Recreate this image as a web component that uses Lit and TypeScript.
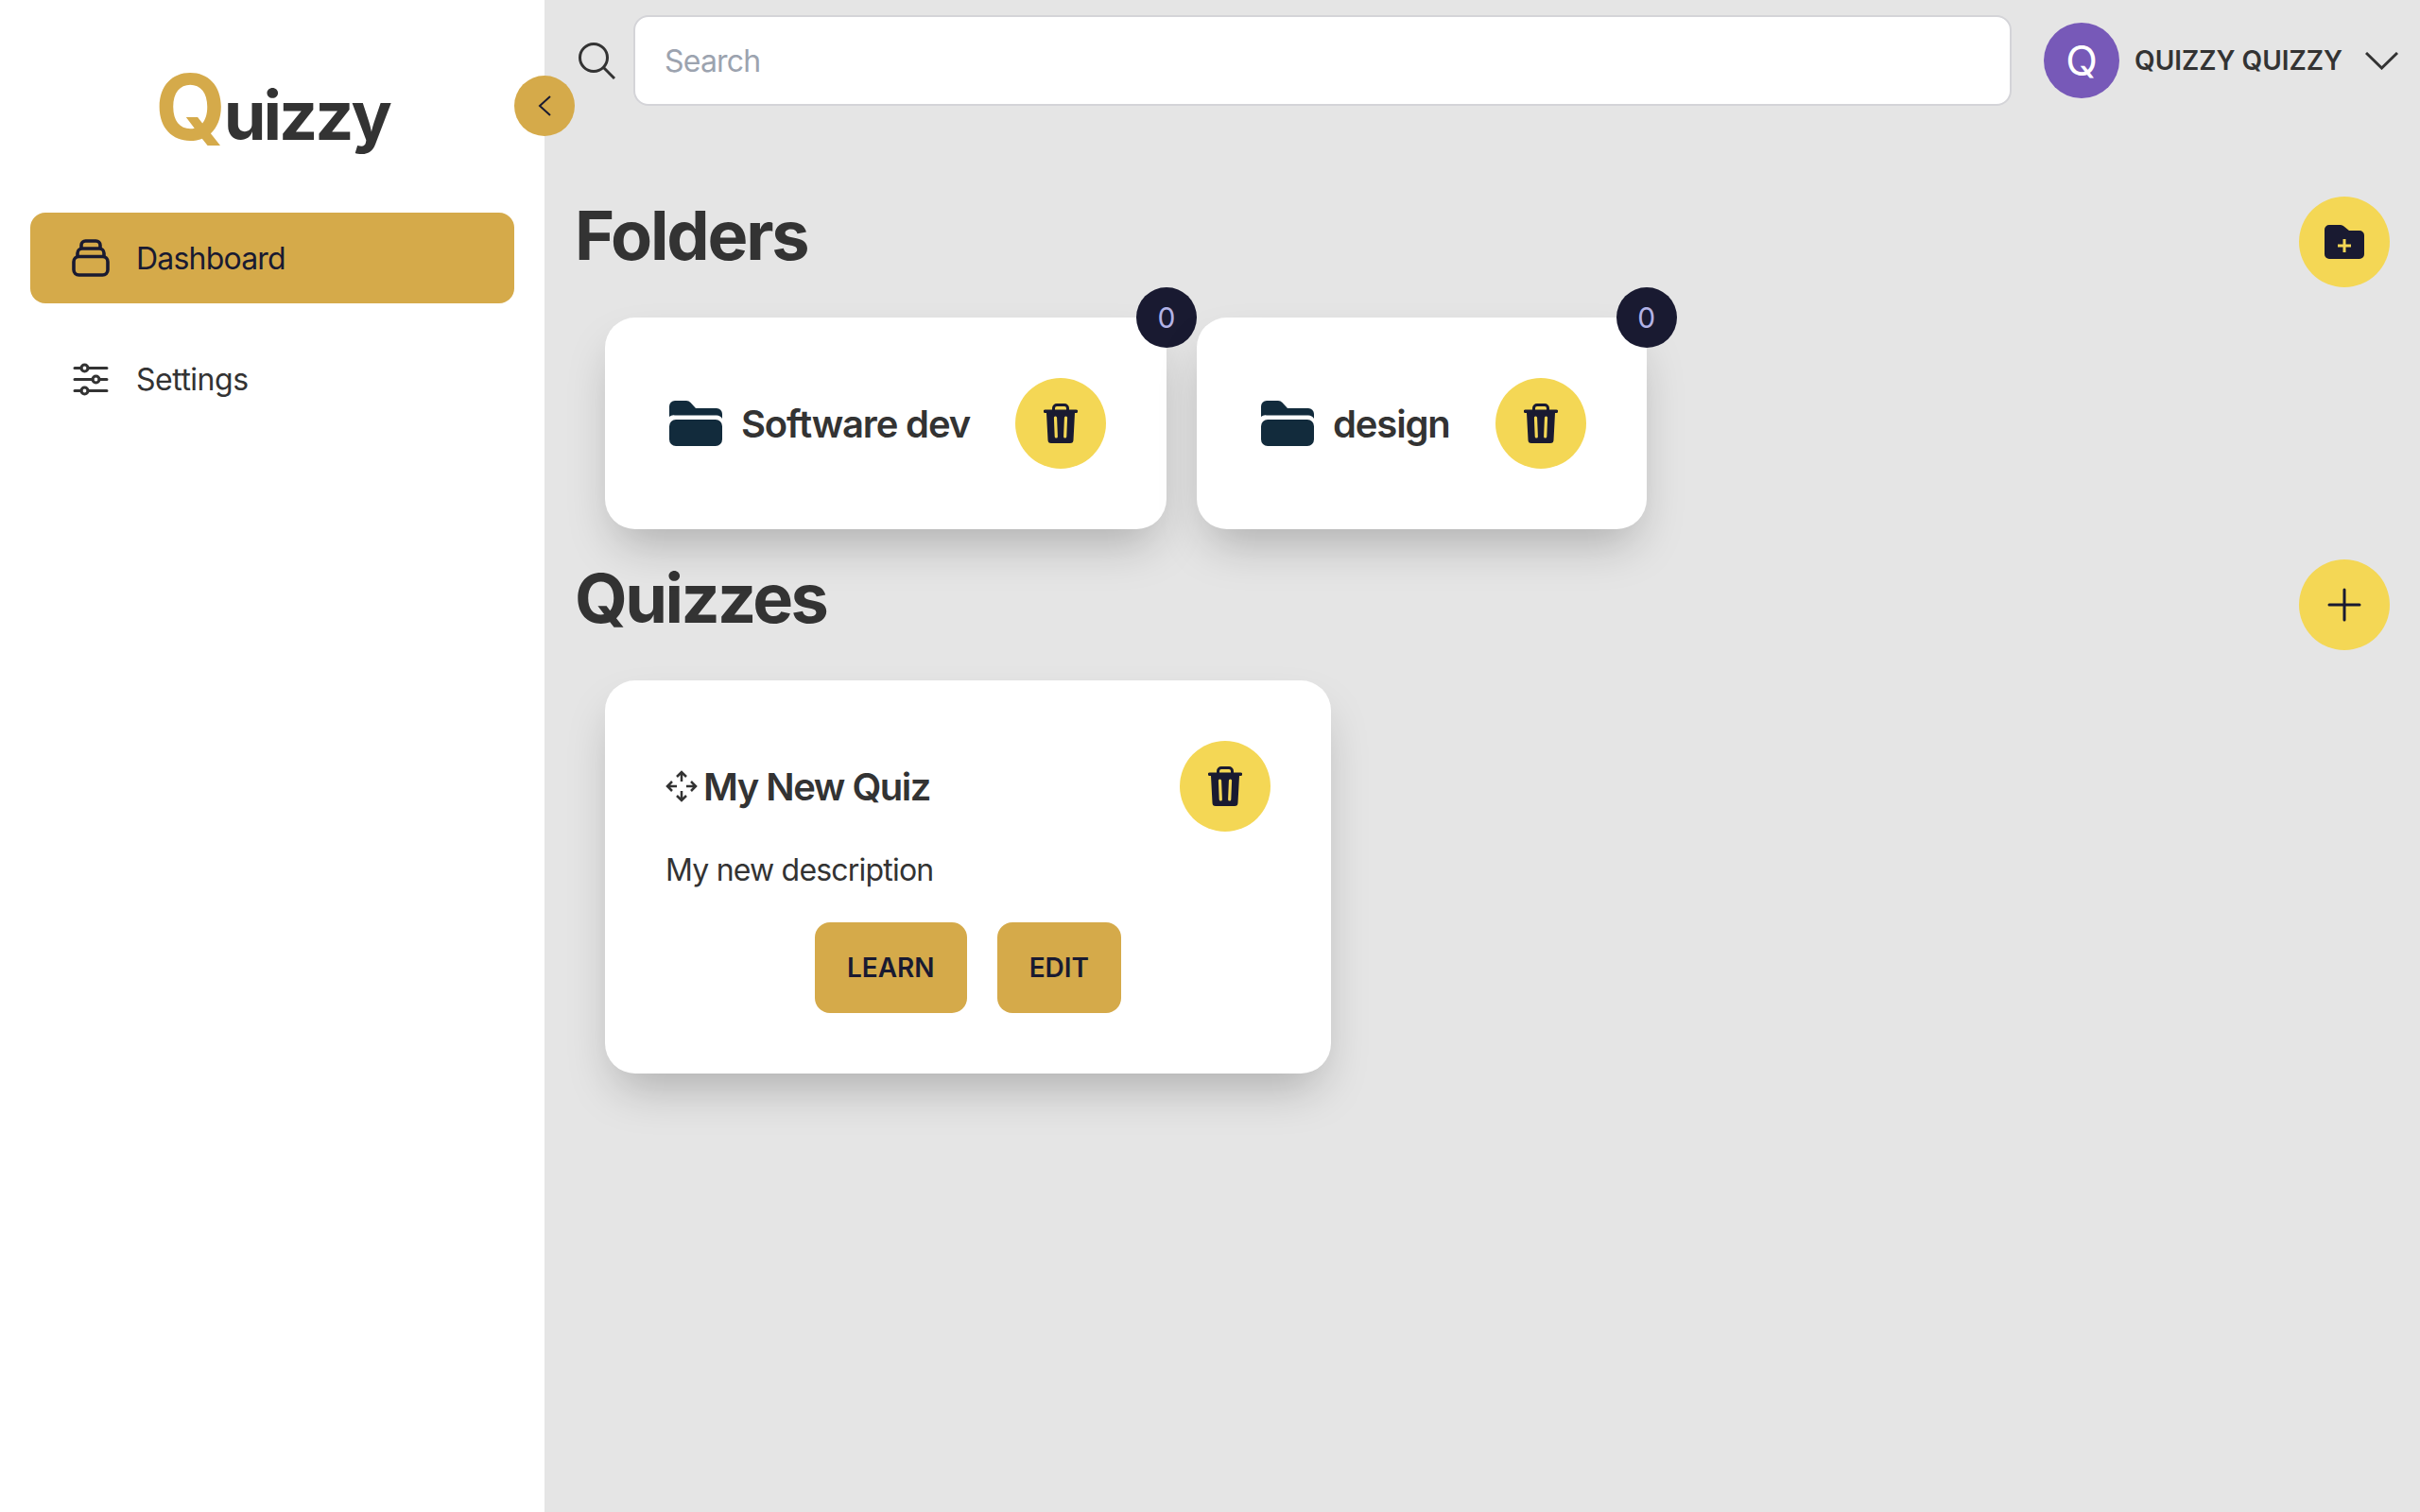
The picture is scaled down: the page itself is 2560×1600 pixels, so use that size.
import { LitElement, css, html, svg } from "lit";
import { customElement } from "lit/decorators.js";

const trashIcon = html`<svg class="trash" viewBox="0 0 36 42" width="36" height="42">
  <path d="M10.5 8V5a3.5 3.5 0 0 1 3.5-3.5h8A3.5 3.5 0 0 1 25.500 5V8" fill="none" stroke="#191a31" stroke-width="3" />
  <path d="M1.500 6.500H34.500a1.500 1.500 0 0 1 0 3.500L33 10 31.500 38.500a3.500 3.500 0 0 1-3.500 3.500H8a3.500 3.500 0 0 1-3.500-3.500L3 10H1.500a1.500 1.500 0 0 1 0-3.500z" fill="#191a31" />
  <path d="M12.500 15l.8 20M23.500 15l-.8 20" fill="none" stroke="#f4d755" stroke-width="3.200" stroke-linecap="round" />
</svg>`;

const folderIcon = html`<svg viewBox="0 0 56 48" width="56" height="48" class="folder">
  <path d="M0 17V6a6 6 0 0 1 6-6H18a6 6 0 0 1 4.500 2L28 8H50a6 6 0 0 1 6 6V19a7 7 0 0 0-6-3.500H6a7 7 0 0 0-6 1.500z" fill="#122b3c" />
  <rect y="20" width="56" height="28" rx="7" fill="#122b3c" />
</svg>`;

const folders = [
  { name: "Software dev", count: 0 },
  { name: "design", count: 0 },
];

const arrowPaths = svg`
  <path d="M17 2V12M12 7l5-5 5 5M17 32V22M12 27l5 5 5-5M2 17H12M7 12l-5 5 5 5M32 17H22M27 12l5 5-5 5" />
`;

@customElement("app-root")
export class AppRoot extends LitElement {
  static styles = css`
    :host {
      display: flex;
      width: 2560px;
      min-height: 1600px;
      font-family: Inter, "Liberation Sans", sans-serif;
      color: #333;
      background: #e5e5e5;
    }
    .sidebar {
      position: relative;
      flex: 0 0 576px;
      background: #fff;
      box-sizing: border-box;
      padding: 0 32px;
    }
    .logo {
      height: 225px;
      box-sizing: border-box;
      padding-top: 58px;
      text-align: center;
      font-weight: 700;
      font-size: 72px;
      line-height: 110px;
      letter-spacing: -3px;
      white-space: nowrap;
    }
    .logo span {
      color: #d5aa4a;
      font-size: 96px;
      letter-spacing: -2px;
    }
    .collapse {
      position: absolute;
      top: 80px;
      right: -32px;
      width: 64px;
      height: 64px;
      border-radius: 50%;
      background: #d5aa4a;
      display: flex;
      align-items: center;
      justify-content: center;
      z-index: 2;
    }
    .nav {
      display: flex;
      flex-direction: column;
      gap: 32px;
    }
    .nav-item {
      display: flex;
      align-items: center;
      gap: 28px;
      height: 96px;
      padding-left: 44px;
      border-radius: 16px;
      font-size: 32px;
      letter-spacing: -0.5px;
    }
    .nav-item.active {
      background: #d5aa4a;
      color: #191a31;
      letter-spacing: -0.8px;
    }
    .nav-icon {
      flex: 0 0 40px;
    }
    .main {
      flex: 1;
      min-width: 0;
      display: flex;
      flex-direction: column;
      padding: 16px 32px 0;
    }
    .topbar {
      display: flex;
      align-items: center;
      height: 96px;
      margin-bottom: 96px;
    }
    .search-icon {
      margin-left: 4px;
      margin-right: 19px;
      flex: none;
    }
    .search {
      flex: 0 0 1458px;
      height: 96px;
      box-sizing: border-box;
      border: 2px solid #d4d4d8;
      border-radius: 16px;
      background: #fff;
      padding-left: 31px;
      display: flex;
      align-items: center;
      font-size: 32px;
      letter-spacing: -0.8px;
      color: #9ca3af;
    }
    .user {
      display: flex;
      align-items: center;
      margin-left: 34px;
    }
    .avatar {
      width: 80px;
      height: 80px;
      border-radius: 50%;
      background: #7759b8;
      color: #fff;
      display: flex;
      align-items: center;
      justify-content: center;
      font-size: 44px;
    }
    .username {
      margin-left: 16px;
      margin-right: 24px;
      font-size: 28px;
      font-weight: 600;
      white-space: nowrap;
    }
    .section-head {
      display: flex;
      justify-content: space-between;
      align-items: center;
      height: 96px;
      margin-bottom: 32px;
    }
    h2 {
      margin: 0 0 14px;
      font-size: 72px;
      font-weight: 700;
      line-height: 88px;
      letter-spacing: -2.200px;
    }
    h2.quizzes {
      letter-spacing: -2.600px;
    }
    .round {
      flex: none;
      width: 96px;
      height: 96px;
      border-radius: 50%;
      background: #f4d755;
      display: flex;
      align-items: center;
      justify-content: center;
    }
    .cards {
      display: flex;
      gap: 32px;
      padding-left: 32px;
      margin-bottom: 32px;
    }
    .card {
      position: relative;
      background: #fff;
      border-radius: 32px;
      padding: 64px;
      box-shadow: 0 25px 50px -12px rgba(0, 0, 0, 0.25);
    }
    .folder-card {
      display: flex;
      align-items: center;
      gap: 48px;
    }
    .folder-title {
      display: flex;
      align-items: center;
      gap: 20px;
      font-size: 40px;
      font-weight: 600;
      letter-spacing: -1.150px;
      white-space: nowrap;
    }
    .folder {
      margin-left: 4px;
      flex: none;
    }
    .badge {
      position: absolute;
      top: -32px;
      right: -32px;
      width: 64px;
      height: 64px;
      border-radius: 50%;
      background: #191a31;
      color: #b3b3e6;
      display: flex;
      align-items: center;
      justify-content: center;
      font-size: 30px;
    }
    .quiz-card {
      width: 768px;
      height: 416px;
      box-sizing: border-box;
    }
    .quiz-head {
      display: flex;
      justify-content: space-between;
      align-items: center;
    }
    .quiz-title {
      display: flex;
      align-items: center;
      gap: 6px;
      font-size: 40px;
      font-weight: 600;
      letter-spacing: -1.500px;
    }
    .quiz-desc {
      margin-top: 17px;
      font-size: 32px;
      line-height: 48px;
      letter-spacing: -0.8px;
    }
    .actions {
      display: flex;
      justify-content: center;
      gap: 32px;
      margin-top: 31px;
    }
    .btn {
      height: 96px;
      padding: 0 34px;
      border-radius: 16px;
      background: #d5aa4a;
      color: #191a31;
      display: flex;
      align-items: center;
      font-size: 28px;
      font-weight: 600;
    }
  `;

  render() {
    return html`
      <aside class="sidebar">
        <div class="logo"><span>Q</span>uizzy</div>
        <div class="collapse">
          <svg width="14" height="22" viewBox="0 0 14 22" fill="none" stroke="#191a31" stroke-width="2">
            <path d="M13 1L2 11l11 10" />
          </svg>
        </div>
        <nav class="nav">
          <div class="nav-item active">
            <svg class="nav-icon" width="40" height="40" viewBox="0 0 40 40" fill="none" stroke="#191a31" stroke-width="3.600">
              <rect x="2" y="18.500" width="36" height="19.500" rx="5.500" />
              <path d="M6 18.500V15a5 5 0 0 1 5-5h18a5 5 0 0 1 5 5v3.500" />
              <path d="M10 10V6.500a4.500 4.500 0 0 1 4.500-4.500h11a4.500 4.500 0 0 1 4.500 4.500V10" />
            </svg>
            Dashboard
          </div>
          <div class="nav-item">
            <svg class="nav-icon" width="40" height="40" viewBox="0 0 40 40" fill="none" stroke="#333" stroke-width="3">
              <path d="M3 8.500H10M17 8.500H37M3 20.500H22M29 20.500H37M3 32.500H10M17 32.500H37" stroke-linecap="round" />
              <circle cx="13.500" cy="8.500" r="3.500" />
              <circle cx="25.500" cy="20.500" r="3.500" />
              <circle cx="13.500" cy="32.500" r="3.500" />
            </svg>
            Settings
          </div>
        </nav>
      </aside>
      <main class="main">
        <div class="topbar">
          <svg class="search-icon" width="39" height="39" viewBox="0 0 39 39" fill="none" stroke="#333" stroke-width="3">
            <circle cx="16" cy="16" r="14.500" />
            <path d="M26.500 26.500L38 38" />
          </svg>
          <div class="search">Search</div>
          <div class="user">
            <div class="avatar">Q</div>
            <span class="username">QUIZZY QUIZZY</span>
            <svg width="35" height="19" viewBox="0 0 35 19" fill="none" stroke="#333" stroke-width="3">
              <path d="M1 1L17.500 17 34 1" />
            </svg>
          </div>
        </div>

        <div class="section-head">
          <h2>Folders</h2>
          <div class="round">
            <svg width="42" height="36" viewBox="0 0 42 36">
              <path d="M0 5a5 5 0 0 1 5-5H17a5 5 0 0 1 3.500 1.500L26 6H37a5 5 0 0 1 5 5V31a5 5 0 0 1-5 5H5a5 5 0 0 1-5-5z" fill="#191a31" />
              <path d="M21 15V29M14 22H28" fill="none" stroke="#f4d755" stroke-width="3" />
            </svg>
          </div>
        </div>
        <div class="cards">
          ${folders.map(
            (f) => html`
              <div class="card folder-card">
                <div class="badge">${f.count}</div>
                <div class="folder-title">${folderIcon}<span>${f.name}</span></div>
                <div class="round">${trashIcon}</div>
              </div>
            `
          )}
        </div>

        <div class="section-head">
          <h2 class="quizzes">Quizzes</h2>
          <div class="round">
            <svg width="36" height="36" viewBox="0 0 36 36" fill="none" stroke="#191a31" stroke-width="3" stroke-linecap="round">
              <path d="M18 2V34M2 18H34" />
            </svg>
          </div>
        </div>
        <div class="cards">
          <div class="card quiz-card">
            <div class="quiz-head">
              <div class="quiz-title">
                <svg width="34" height="34" viewBox="0 0 34 34" fill="none" stroke="#333" stroke-width="2.500">${arrowPaths}</svg>
                <span>My New Quiz</span>
              </div>
              <div class="round">${trashIcon}</div>
            </div>
            <div class="quiz-desc">My new description</div>
            <div class="actions">
              <div class="btn">LEARN</div>
              <div class="btn">EDIT</div>
            </div>
          </div>
        </div>
      </main>
    `;
  }
}
